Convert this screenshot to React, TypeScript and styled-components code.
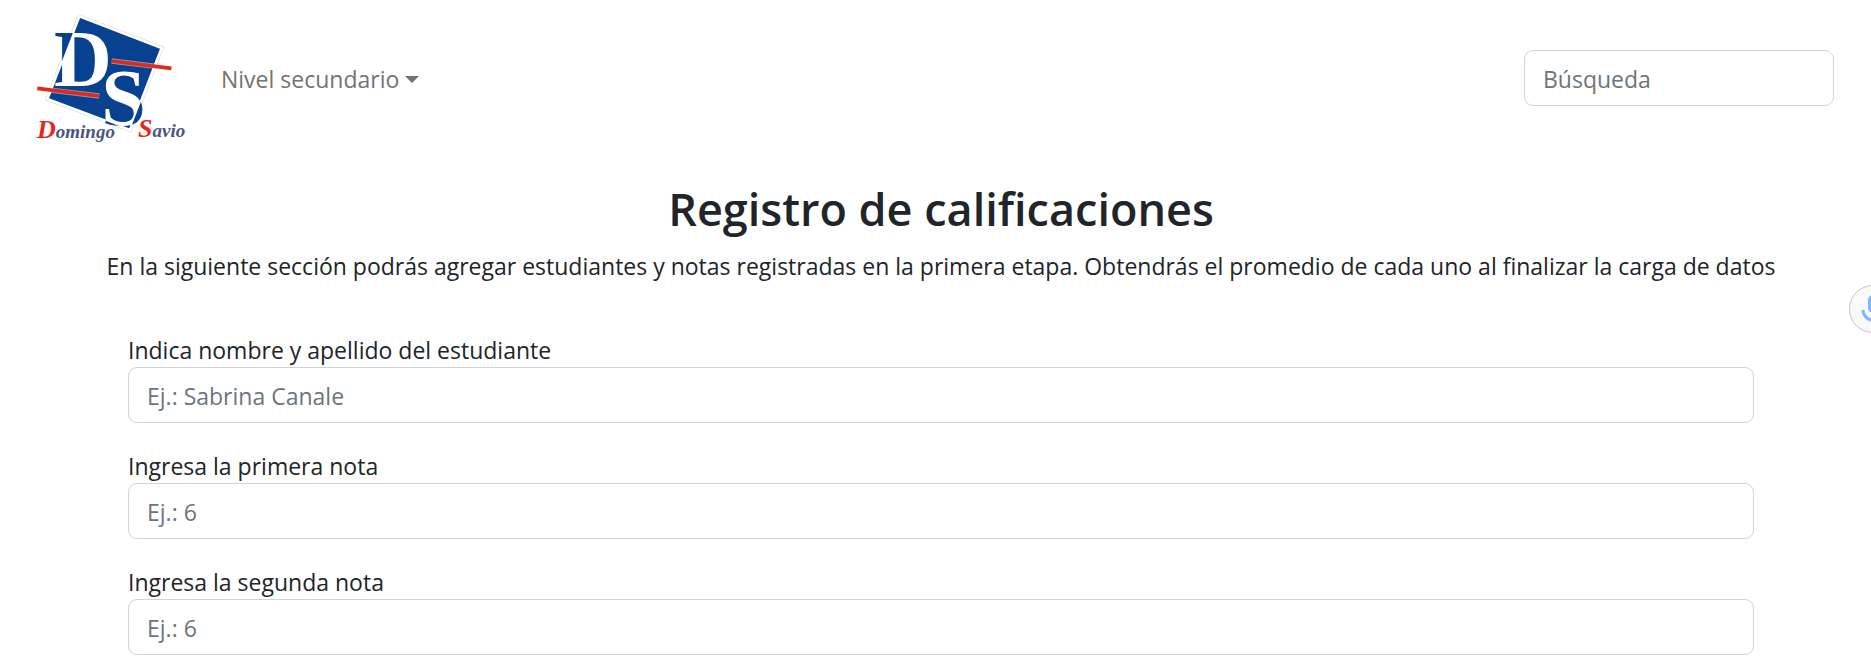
import React from 'react';
import styled, { createGlobalStyle } from 'styled-components';

const GlobalStyle = createGlobalStyle`
  *, *::before, *::after { box-sizing: border-box; }
  body {
    margin: 0;
    background: #fff;
    color: #212529;
    font-family: 'Segoe UI', 'Open Sans', 'Noto Sans', sans-serif;
    font-size: 23px;
    line-height: 36px;
    overflow-x: hidden;
  }
`;

const Navbar = styled.nav`
  display: flex;
  align-items: center;
  padding: 6px 37px 6px 30px;
`;

const Brand = styled.a`
  display: block;
  margin-right: 31px;
  svg { display: block; }
`;

const Dropdown = styled.button`
  display: flex;
  align-items: center;
  gap: 6px;
  padding: 2px 0 0;
  border: 0;
  background: none;
  color: #737373;
  font: inherit;
  cursor: pointer;

  &::after {
    content: '';
    border-top: 7px solid;
    border-right: 7px solid transparent;
    border-left: 7px solid transparent;
  }
`;

const TextInput = styled.input`
  display: block;
  width: 100%;
  height: 56px;
  padding: 11px 18px 9px;
  border: 1px solid #ced4da;
  border-radius: 9px;
  background: #fff;
  color: #212529;
  font: inherit;

  &::placeholder { color: #6c757d; opacity: 1; }
`;

const Search = styled.form`
  width: 310px;
  margin-left: auto;
`;

const Main = styled.main`
  padding: 24px 117px 40px 128px;
`;

const Intro = styled.header`
  margin: 0 -24px;
  text-align: center;
`;

const Title = styled.h1`
  margin: 0 0 10px;
  font-size: 45px;
  line-height: 58px;
  font-weight: 600;
`;

const Lead = styled.p`
  margin: 0;
`;

const GradeForm = styled.form`
  display: grid;
  gap: 24px;
  margin-top: 47px;
`;

const Label = styled.label`
  display: block;
  padding-top: 2px;
  line-height: 34px;
`;

const VoiceButton = styled.button`
  position: fixed;
  top: 285px;
  right: -26px;
  display: flex;
  align-items: center;
  justify-content: center;
  width: 48px;
  height: 48px;
  padding: 0;
  border: 1px solid #c4c4c4;
  border-radius: 50%;
  background: #f9f9f9;
  color: #7fb8ff;
`;

const BigLetter = styled.text`
  font-family: 'Liberation Serif', serif;
  font-weight: 700;
  font-size: 240px;
`;

const Name = styled.text`
  font-family: 'Liberation Serif', serif;
  font-weight: 700;
  font-style: italic;
  font-size: 57px;
  fill: #4a5482;
`;

const Initial = styled.tspan`
  font-size: 78px;
  fill: #e5261b;
`;

const SQUARE = 'M178 49 425 144 330 390 82 297Z';

/* The big letters are white over the square and blue where they leave it. */
const Logo = () => (
  <svg width="160" height="144" viewBox="30 18 480 432" role="img" aria-label="Domingo Savio">
    <pattern id="logo-letters" patternUnits="userSpaceOnUse" width="600" height="480">
      <rect width="600" height="480" fill="#07418f" />
      <path d={SQUARE} fill="#fff" />
    </pattern>
    <path d={SQUARE} fill="#07418f" stroke="#d9dde2" strokeWidth="12" />
    <path d={SQUARE} fill="#07418f" stroke="#fff" strokeWidth="8" />
    <g fill="url(#logo-letters)">
      <BigLetter x="102" y="258">D</BigLetter>
      <BigLetter x="244" y="374">S</BigLetter>
    </g>
    <path d="M48 265 238 288M275 183 458 205" stroke="#f1f1f1" strokeWidth="16" opacity="0.5" />
    <path d="M52 265 238 288M275 183 454 205" stroke="#e5261b" strokeWidth="11" />
    <Name x="51" y="414"><Initial>D</Initial>omingo</Name>
    <Name x="354" y="412"><Initial>S</Initial>avio</Name>
  </svg>
);

const MicIcon = () => (
  <svg width="28" height="28" viewBox="0 0 28 28" fill="none" aria-hidden="true">
    <rect x="9" y="0" width="10" height="18" rx="5" fill="currentColor" />
    <path d="M4 15a10 10 0 0 0 20 0M14 25v3" stroke="currentColor" strokeWidth="3" />
  </svg>
);

const fields = [
  { id: 'nombre', label: 'Indica nombre y apellido del estudiante', placeholder: 'Ej.: Sabrina Canale' },
  { id: 'nota1', label: 'Ingresa la primera nota', placeholder: 'Ej.: 6' },
  { id: 'nota2', label: 'Ingresa la segunda nota', placeholder: 'Ej.: 6' },
];

export default function App() {
  return (
    <>
      <GlobalStyle />
      <Navbar>
        <Brand href="#"><Logo /></Brand>
        <Dropdown type="button" aria-haspopup="true">Nivel secundario</Dropdown>
        <Search role="search">
          <TextInput type="search" placeholder="Búsqueda" aria-label="Búsqueda" />
        </Search>
      </Navbar>
      <Main>
        <Intro>
          <Title>Registro de calificaciones</Title>
          <Lead>
            En la siguiente sección podrás agregar estudiantes y notas registradas en la primera etapa. Obtendrás el
            promedio de cada uno al finalizar la carga de datos
          </Lead>
        </Intro>
        <GradeForm>
          {fields.map((field) => (
            <div key={field.id}>
              <Label htmlFor={field.id}>{field.label}</Label>
              <TextInput id={field.id} type="text" placeholder={field.placeholder} />
            </div>
          ))}
        </GradeForm>
      </Main>
      <VoiceButton type="button" aria-label="Dictado por voz">
        <MicIcon />
      </VoiceButton>
    </>
  );
}
